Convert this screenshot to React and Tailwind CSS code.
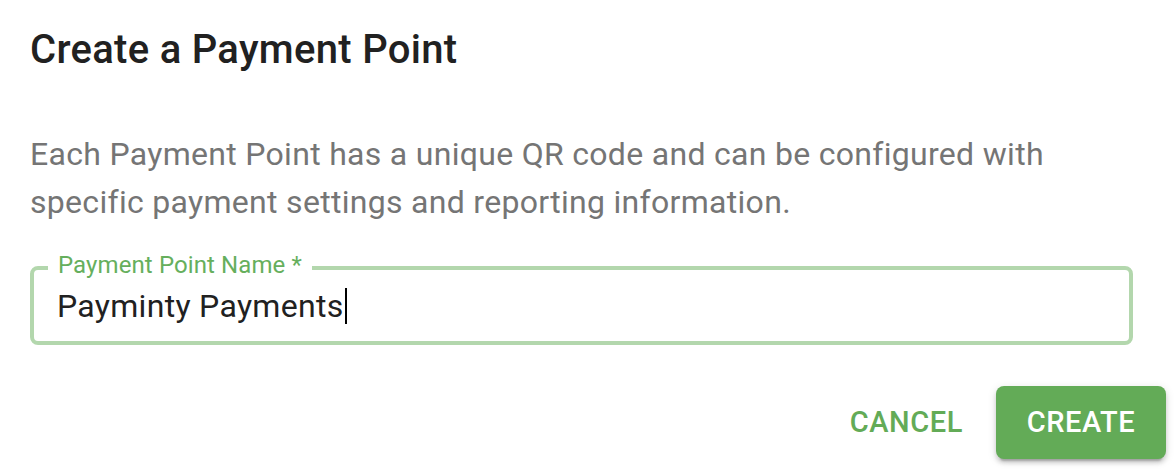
import React from 'react';

const font = { fontFamily: 'Roboto, "Liberation Sans", sans-serif' };

/**
 * Payment Point 作成ダイアログ
 */
const App = () => {
  return (
    <div className="w-[1175px] h-[474px] bg-white overflow-hidden" style={font}>
      {/* タイトル */}
      <h2 className="pl-[30px] pt-[18px] text-[40px] leading-[64px] font-medium tracking-[0.3px] text-[#212121]">
        Create a Payment Point
      </h2>

      {/* 説明 */}
      <div className="pl-[30px] pr-[42px] pt-[48px]">
        <p className="text-[32px] leading-[48px] tracking-[0.3px] text-[#757575]">
          Each Payment Point has a unique QR code and can be configured with
          specific payment settings and reporting information.
        </p>

        {/* 入力欄 */}
        <div className="relative mt-[40px] h-[79px] rounded-[8px] border-[4px] border-[#b3d7ad] flex items-center pl-[23px]">
          <span className="absolute left-[14px] top-[-17px] bg-white px-[10px] text-[24px] leading-[24px] tracking-[0.1px] text-[#66af5d]">
            Payment Point Name *
          </span>
          <span className="text-[32px] leading-[40px] tracking-[0.3px] text-[#212121]">Payminty Payments</span>
          <span className="ml-[1px] w-[2px] h-[36px] bg-black" />
        </div>
      </div>

      {/* ボタン */}
      <div className="flex justify-end items-center gap-[12px] pr-[9px] pt-[41px]">
        <button className="h-[73px] px-[21px] text-[29px] font-medium uppercase tracking-[0.6px] text-[#63ab57]">
          Cancel
        </button>
        <button className="h-[73px] w-[170px] rounded-[8px] bg-[#63ab57] text-[29px] font-medium uppercase tracking-[0.6px] text-white shadow-[0_6px_2px_-4px_rgba(0,0,0,0.2),0_4px_4px_0_rgba(0,0,0,0.14),0_2px_10px_0_rgba(0,0,0,0.12)]">
          Create
        </button>
      </div>
    </div>
  );
};

export default App;
